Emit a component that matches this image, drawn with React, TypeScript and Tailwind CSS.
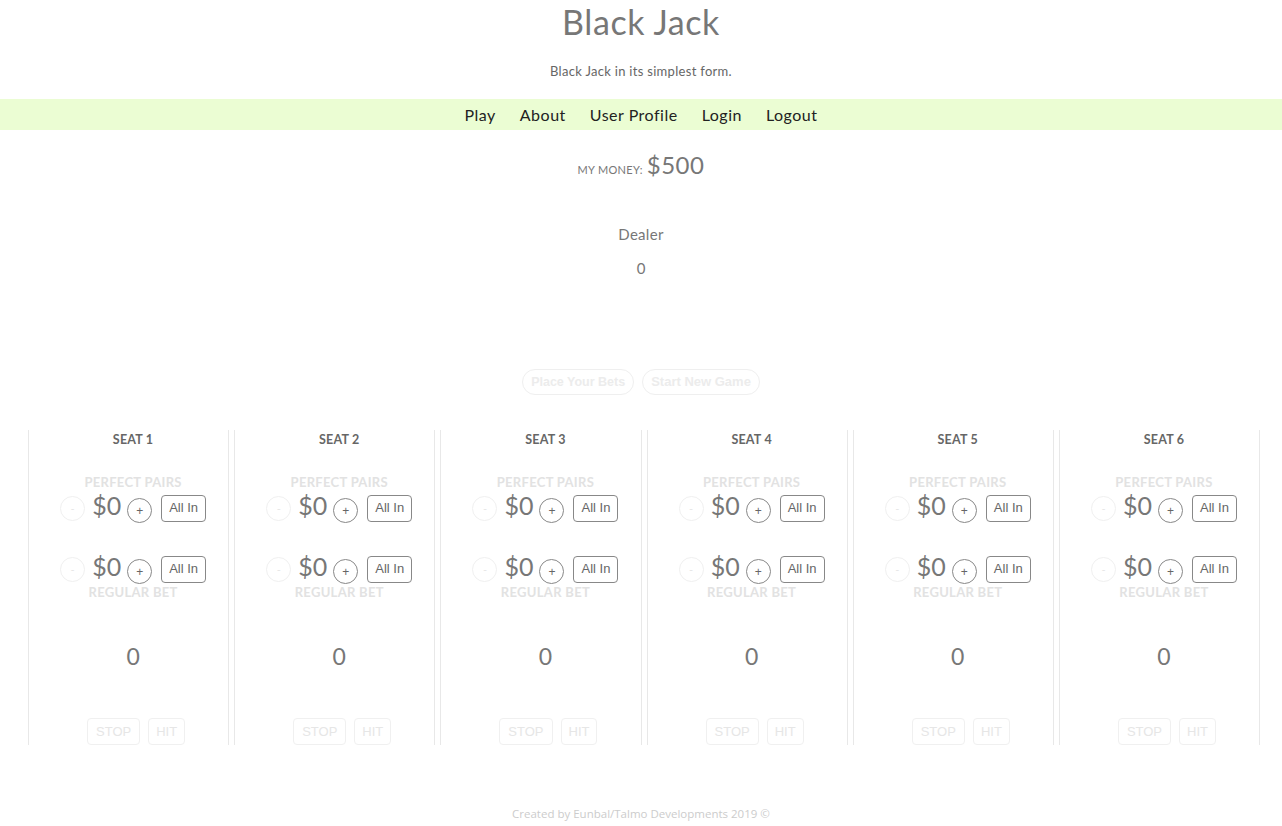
import React from "react";

const seats = [1, 2, 3, 4, 5, 6];

const BetRow: React.FC = () => (
  <div className="flex items-center justify-center">
    <button className="w-[25px] h-[25px] rounded-full border border-[#f0f0f0] text-[#e6e6e6] text-[11px] flex items-center justify-center font-['Liberation_Sans',sans-serif]">
      -
    </button>
    <span className="ml-[7px] text-[25px] leading-none text-[#777] -mt-[6px]">
      $0
    </span>
    <button className="ml-[6px] mt-[5px] w-[25px] h-[25px] rounded-full border border-[#888] text-[#666] text-[12px] flex items-center justify-center font-['Liberation_Sans',sans-serif]">
      +
    </button>
    <button className="ml-[9px] h-[27px] px-[7px] rounded-[4px] border border-[#888] text-[#666] text-[13px] font-['Liberation_Sans',sans-serif]">
      All In
    </button>
  </div>
);

const Seat: React.FC<{ n: number }> = ({ n }) => (
  <div className="flex-1 h-[315px] border-x border-[#e8e8e8] pl-[9px] flex flex-col items-center">
    <div className="mt-[2px] text-[12.5px] leading-[16px] text-[#666] font-bold tracking-[0.2px]">
      SEAT {n}
    </div>
    <div className="mt-[26px] text-[13px] leading-[16px] text-[#e2e2e2] font-bold tracking-[0.3px]">
      PERFECT PAIRS
    </div>
    <div className="mt-[3px] w-full">
      <BetRow />
    </div>
    <div className="mt-[31px] w-full">
      <BetRow />
    </div>
    <div className="mt-0 text-[13px] leading-[16px] text-[#e2e2e2] font-bold tracking-[0.3px]">
      REGULAR BET
    </div>
    <div className="mt-[43px] text-[23px] leading-[26px] text-[#777]">0</div>
    <div className="mt-auto flex gap-[8px] pl-[6px] font-['Liberation_Sans',sans-serif]">
      <button className="h-[27px] px-[8px] rounded-[4px] border border-[#f0f0f0] text-[#e6e6e6] text-[13px]">
        STOP
      </button>
      <button className="h-[27px] px-[7px] rounded-[4px] border border-[#f0f0f0] text-[#e6e6e6] text-[13px]">
        HIT
      </button>
    </div>
  </div>
);

export default function App() {
  return (
    <div className="min-h-[826px] bg-white font-['Lato',sans-serif] text-[#777]">
      <h1 className="pt-[2px] text-center text-[34px] leading-[40px] tracking-[0.6px] text-[#777]">
        Black Jack
      </h1>
      <p className="mt-[20px] text-center text-[13px] leading-[18px] tracking-[0.3px] text-[#666]">
        Black Jack in its simplest form.
      </p>
      <nav className="mt-[19px] h-[31px] bg-[#ebfdd3] flex items-center justify-center gap-[24px] text-[16px] tracking-[0.5px] text-[#222]">
        <a>Play</a>
        <a>About</a>
        <a>User Profile</a>
        <a>Login</a>
        <a>Logout</a>
      </nav>
      <div className="mt-[21px] flex items-baseline justify-center gap-[4px]">
        <span className="text-[11px] text-[#777] uppercase tracking-[0.3px]">
          my money:
        </span>
        <span className="text-[24px] leading-[28px] text-[#777] tracking-[0.5px]">
          $500
        </span>
      </div>
      <div className="mt-[45px] text-center text-[15px] leading-[20px] tracking-[0.3px] text-[#777]">
        Dealer
      </div>
      <div className="mt-[14px] text-center text-[15px] leading-[20px] text-[#777]">
        0
      </div>
      <div className="mt-[91px] flex justify-center gap-[8px] font-['Liberation_Sans',sans-serif]">
        <button className="h-[26px] px-[8px] rounded-full border border-[#efefef] text-[12.5px] font-bold text-[#ececec]">
          Place Your Bets
        </button>
        <button className="h-[26px] px-[8px] rounded-full border border-[#efefef] text-[13px] font-bold text-[#ececec]">
          Start New Game
        </button>
      </div>
      <div className="mt-[35px] pl-[28px] pr-[22px] flex gap-[5px]">
        {seats.map((n) => (
          <Seat key={n} n={n} />
        ))}
      </div>
      <footer className="mt-[60px] text-center text-[11.5px] text-[#ccc] font-['Open_Sans',sans-serif]">
        Created by Eunbal/Talmo Developments 2019 ©
      </footer>
    </div>
  );
}
